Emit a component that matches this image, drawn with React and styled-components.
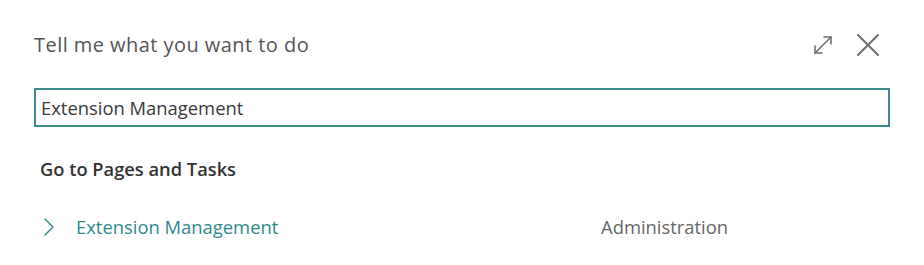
import React from "react";
import styled, { createGlobalStyle } from "styled-components";

const GlobalStyle = createGlobalStyle`
  html, body {
    margin: 0;
    padding: 0;
    background: #ffffff;
  }
  body {
    font-family: "Open Sans", "Noto Sans", "Liberation Sans", sans-serif;
  }
`;

const Panel = styled.div`
  width: 924px;
  height: 265px;
  box-sizing: border-box;
  background: #ffffff;
  padding: 24px 34px 0 34px;
  display: flex;
  flex-direction: column;
`;

const Header = styled.div`
  display: flex;
  align-items: center;
  justify-content: space-between;
  height: 42px;
`;

const Title = styled.h1`
  margin: 0;
  font-size: 20px;
  line-height: 28px;
  font-weight: 400;
  color: #555555;
  letter-spacing: 0.45px;
`;

const Actions = styled.div`
  display: flex;
  align-items: center;
  gap: 22px;
  margin-right: 10px;
`;

const IconButton = styled.button`
  border: none;
  background: none;
  padding: 0;
  width: ${(p) => p.size}px;
  height: ${(p) => p.size}px;
  display: flex;
  align-items: center;
  justify-content: center;
  color: #6b6b6b;
  cursor: pointer;
`;

const SearchInput = styled.input`
  margin-top: 22px;
  width: 856px;
  height: 39px;
  box-sizing: border-box;
  border: 2px solid #3e8b8e;
  outline: none;
  padding: 0 5px;
  font-family: inherit;
  font-size: 18.4px;
  color: #3a3a3a;
`;

const SectionTitle = styled.h2`
  margin: 30px 0 0 6px;
  font-size: 18.3px;
  font-weight: 600;
  color: #333333;
  line-height: 24px;
`;

const ResultRow = styled.div`
  margin-top: 34px;
  display: grid;
  grid-template-columns: 42px 525px 1fr;
  align-items: center;
  height: 24px;
`;

const Chevron = styled.span`
  display: flex;
  align-items: center;
  padding-left: 10px;
  color: #3e8b8e;
`;

const ResultLink = styled.a`
  font-size: 18.4px;
  line-height: 24px;
  color: #2f8a8c;
  text-decoration: none;
`;

const Category = styled.span`
  font-size: 18.4px;
  line-height: 24px;
  color: #666666;
`;

export default function App() {
  return (
    <>
      <GlobalStyle />
      <Panel>
        <Header>
          <Title>Tell me what you want to do</Title>
          <Actions>
            <IconButton size={22} aria-label="Expand">
              <svg width="22" height="22" viewBox="0 0 22 22" fill="none" stroke="currentColor" strokeWidth="1.5" strokeLinecap="round" strokeLinejoin="round">
                <path d="M3 19 L19 3" />
                <path d="M12 3 H19 V10" />
                <path d="M3 12 V19 H10" />
              </svg>
            </IconButton>
            <IconButton size={24} aria-label="Close">
              <svg width="24" height="24" viewBox="0 0 24 24" fill="none" stroke="currentColor" strokeWidth="2" strokeLinecap="round">
                <path d="M2 2 L22 22" />
                <path d="M22 2 L2 22" />
              </svg>
            </IconButton>
          </Actions>
        </Header>
        <SearchInput defaultValue="Extension Management" />
        <SectionTitle>Go to Pages and Tasks</SectionTitle>
        <ResultRow>
          <Chevron>
            <svg width="10" height="18" viewBox="0 0 10 18" fill="none" stroke="currentColor" strokeWidth="1.5" strokeLinecap="round" strokeLinejoin="round">
              <path d="M1 1 L9 9 L1 17" />
            </svg>
          </Chevron>
          <ResultLink href="#">Extension Management</ResultLink>
          <Category>Administration</Category>
        </ResultRow>
      </Panel>
    </>
  );
}
